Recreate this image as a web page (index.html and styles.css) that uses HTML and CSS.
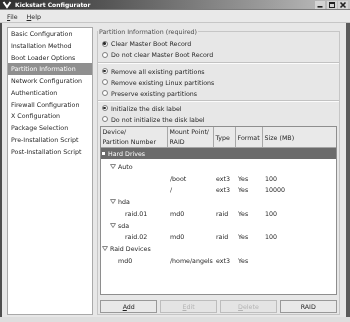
FILE: index.html
```html
<!doctype html>
<html>
<head>
  <link rel="stylesheet" href="styles.css">
</head>
<body>
  <div class="titlebar">
    <svg class="winicon" viewBox="0 0 10 9"><polyline points="1.5,2 5,7 8.5,2" fill="none" stroke="#fff" stroke-width="2"/></svg>
    <span class="title">Kickstart Configurator</span>
    <div class="winbtns">
      <span class="wb"><svg viewBox="0 0 10 8"><rect x="2.5" y="5" width="5" height="1.6" fill="#222"/></svg></span>
      <span class="wb"><svg viewBox="0 0 10 8"><rect x="2.5" y="1.5" width="5" height="5" fill="none" stroke="#222" stroke-width="1"/><rect x="2.5" y="1.5" width="5" height="1.5" fill="#222"/></svg></span>
      <span class="wb"><svg viewBox="0 0 10 8"><path d="M2.5 1.5 L7.5 6.5 M7.5 1.5 L2.5 6.5" stroke="#222" stroke-width="1.6"/></svg></span>
    </div>
  </div>
  <div class="menubar">
    <span><u>F</u>ile</span>
    <span><u>H</u>elp</span>
  </div>

  <div class="main">
    <ul class="sidebar">
      <li>Basic Configuration</li>
      <li>Installation Method</li>
      <li>Boot Loader Options</li>
      <li class="selected">Partition Information</li>
      <li>Network Configuration</li>
      <li>Authentication</li>
      <li>Firewall Configuration</li>
      <li>X Configuration</li>
      <li>Package Selection</li>
      <li>Pre-Installation Script</li>
      <li>Post-Installation Script</li>
    </ul>

    <fieldset class="frame">
      <legend>Partition Information (required)</legend>

      <div class="group g1">
        <div class="radio"><span class="dot on"></span>Clear Master Boot Record</div>
        <div class="radio"><span class="dot"></span>Do not clear Master Boot Record</div>
      </div>
      <div class="sep"></div>
      <div class="group g2">
        <div class="radio"><span class="dot on"></span>Remove all existing partitions</div>
        <div class="radio"><span class="dot"></span>Remove existing Linux partitions</div>
        <div class="radio"><span class="dot"></span>Preserve existing partitions</div>
      </div>
      <div class="sep s2"></div>
      <div class="group g3">
        <div class="radio"><span class="dot on"></span>Initialize the disk label</div>
        <div class="radio"><span class="dot"></span>Do not initialize the disk label</div>
      </div>

      <div class="table">
        <div class="thead">
          <div class="th">Device/<br>Partition Number</div>
          <div class="th">Mount Point/<br>RAID</div>
          <div class="th mid">Type</div>
          <div class="th mid">Format</div>
          <div class="th mid last">Size (MB)</div>
        </div>
        <div class="row selrow">
          <div class="td lvl0"><span class="bullet"></span>Hard Drives</div>
        </div>
        <div class="row first">
          <div class="td lvl1"><svg class="tri" viewBox="0 0 6 5"><polygon points="0.5,0.5 5.5,0.5 3,4.5" fill="#fff" stroke="#6a6a6a" stroke-width="0.8"/></svg>Auto</div>
        </div>
        <div class="row">
          <div class="td"></div><div class="td">/boot</div><div class="td">ext3</div><div class="td">Yes</div><div class="td">100</div>
        </div>
        <div class="row">
          <div class="td"></div><div class="td">/</div><div class="td">ext3</div><div class="td">Yes</div><div class="td">10000</div>
        </div>
        <div class="row">
          <div class="td lvl1"><svg class="tri" viewBox="0 0 6 5"><polygon points="0.5,0.5 5.5,0.5 3,4.5" fill="#fff" stroke="#6a6a6a" stroke-width="0.8"/></svg>hda</div>
        </div>
        <div class="row">
          <div class="td leaf2">raid.01</div><div class="td">md0</div><div class="td">raid</div><div class="td">Yes</div><div class="td">100</div>
        </div>
        <div class="row">
          <div class="td lvl1"><svg class="tri" viewBox="0 0 6 5"><polygon points="0.5,0.5 5.5,0.5 3,4.5" fill="#fff" stroke="#6a6a6a" stroke-width="0.8"/></svg>sda</div>
        </div>
        <div class="row">
          <div class="td leaf2">raid.02</div><div class="td">md0</div><div class="td">raid</div><div class="td">Yes</div><div class="td">100</div>
        </div>
        <div class="row">
          <div class="td lvl0"><svg class="tri" viewBox="0 0 6 5"><polygon points="0.5,0.5 5.5,0.5 3,4.5" fill="#fff" stroke="#6a6a6a" stroke-width="0.8"/></svg>Raid Devices</div>
        </div>
        <div class="row">
          <div class="td leaf1">md0</div><div class="td">/home/angels</div><div class="td">ext3</div><div class="td">Yes</div><div class="td"></div>
        </div>
      </div>

      <div class="buttons">
        <button class="btn"><u>A</u>dd</button>
        <button class="btn off"><u>E</u>dit</button>
        <button class="btn off"><u>D</u>elete</button>
        <button class="btn">RAID</button>
      </div>
    </fieldset>
  </div>
</body>
</html>
```

FILE: styles.css
```css
body {
  margin: 0;
  width: 350px;
  height: 322px;
  overflow: hidden;
  background: #dedede;
  font-family: "DejaVu Sans", sans-serif;
  font-size: 6.3px;
  color: #262626;
}

/* title bar */
.titlebar {
  height: 9px;
  display: flex;
  align-items: center;
  background: linear-gradient(to right, #2e2e2e 0%, #555 30%, #9a9a9a 75%, #c4c4c4 100%);
  border-bottom: 1px solid #7c7c7c;
  will-change: transform;
}
.winicon {
  width: 10px;
  height: 9px;
  margin-left: 2px;
}
.title {
  flex: 1;
  margin-left: 3px;
  color: #fff;
  font-weight: bold;
  font-size: 6px;
}
.winbtns {
  display: flex;
  gap: 1.5px;
  margin-right: 2px;
}
.wb {
  width: 10px;
  height: 8px;
  background: #d4d4d4;
}
.wb svg {
  display: block;
  width: 10px;
  height: 8px;
}

/* menu */
.menubar {
  height: 12px;
  display: flex;
  align-items: center;
  gap: 9px;
  padding-left: 7px;
  background: #e9e9e9;
  border-bottom: 1px solid #c6c6c6;
  will-change: transform;
}

/* main area */
.main {
  height: 294px;
  box-sizing: border-box;
  display: flex;
  padding: 4px 6px 2px 5px;
  background: #e7e7e7;
  border-left: 2px solid #4e4e4e;
  border-right: 4px solid #5a5a5a;
  will-change: transform;
}

.sidebar {
  width: 86px;
  box-sizing: border-box;
  margin: 0;
  padding: 0;
  list-style: none;
  background: #fff;
  border: 1px solid #a9a9a9;
}
.sidebar li {
  height: 11.77px;
  line-height: 11.77px;
  padding-left: 3px;
  white-space: nowrap;
}
.sidebar .selected {
  background: #8f8f8f;
  color: #fff;
}

/* frame */
.frame {
  flex: 1;
  min-width: 0;
  margin: 0 0 0 4px;
  padding: 0 2px 1px;
  border: 1px solid #c6c6c6;
}
.frame legend {
  margin-left: -2px;
  padding: 0 1px;
  line-height: 9px;
  color: #4c4c4c;
}

.group.g1 { margin-top: 2px; }
.group.g2 { margin-top: 1.5px; }
.group.g3 { margin-top: 1px; }

.radio {
  height: 11px;
  display: flex;
  align-items: center;
  padding-left: 1.5px;
  white-space: nowrap;
}
.dot {
  width: 6px;
  height: 6px;
  box-sizing: border-box;
  margin-right: 3.5px;
  border: 1px solid #7d7d7d;
  border-radius: 50%;
  background: #fff;
  display: flex;
  align-items: center;
  justify-content: center;
}
.dot.on::after {
  content: "";
  width: 2.4px;
  height: 2.4px;
  border-radius: 50%;
  background: #2a2a2a;
}

.sep {
  margin: 2px -2px 0;
  height: 1px;
  background: #c2c2c2;
  border-bottom: 1px solid #fbfbfb;
}
.sep.s2 { margin-top: 1px; }

/* partition table */
.table {
  margin-top: 1.5px;
  height: 169px;
  box-sizing: border-box;
  background: #fff;
  border: 1px solid #8e8e8e;
}
.thead, .row {
  display: grid;
  grid-template-columns: 67px 46px 22px 27px 1fr;
}
.thead {
  height: 21px;
  box-sizing: border-box;
  background: #e9e9e9;
  border-bottom: 1px solid #a4a4a4;
}
.th {
  padding-left: 1.5px;
  line-height: 9.5px;
  border-right: 1px solid #a8a8a8;
  white-space: nowrap;
  overflow: hidden;
}
.th.mid {
  display: flex;
  align-items: center;
  padding-top: 2px;
}
.th.last { border-right: none; }

.row {
  height: 11.75px;
  align-items: center;
}
.row.first { margin-top: 2px; }
.selrow {
  height: 10.5px;
  display: flex;
  background: #6b6b6b;
  color: #fff;
}
.td {
  padding-left: 2px;
  white-space: nowrap;
  display: flex;
  align-items: center;
}
.td.lvl0 { padding-left: 1px; }
.td.lvl1 { padding-left: 9px; }
.td.leaf1 { padding-left: 17px; }
.td.leaf2 { padding-left: 24px; }
.bullet {
  width: 3px;
  height: 3px;
  margin-right: 3px;
  background: #fff;
}
.tri {
  width: 6px;
  height: 5px;
  margin-right: 2px;
}

/* buttons */
.buttons {
  margin-top: 5px;
  display: grid;
  grid-template-columns: repeat(4, 1fr);
  gap: 2.4px;
}
.btn {
  height: 13px;
  padding: 0;
  font-family: "DejaVu Sans", sans-serif;
  font-size: 6.3px;
  color: #1e1e1e;
  background: #e9e9e9;
  border: 1px solid #999;
}
.btn.off {
  color: #b4b4b4;
  border-color: #bdbdbd;
  background: #e4e4e4;
}
```
